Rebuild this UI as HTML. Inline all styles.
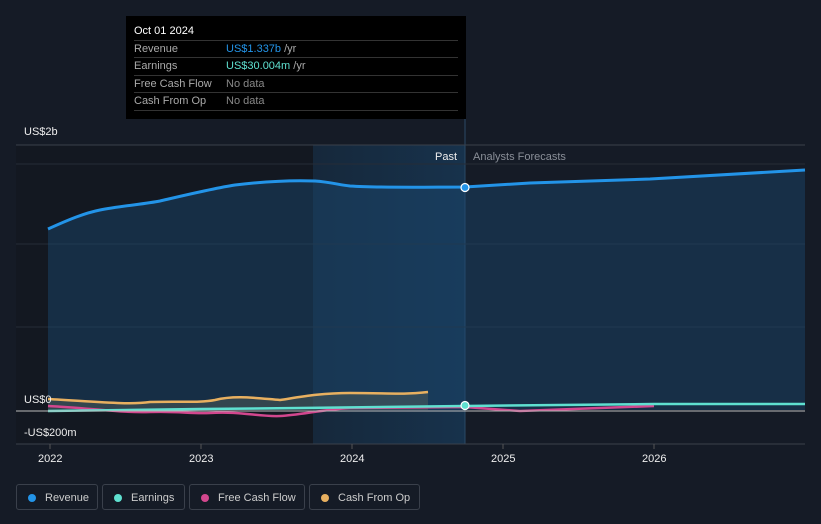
<!DOCTYPE html>
<html><head><meta charset="utf-8"><style>
body{margin:0;background:#151b26;width:821px;height:524px;overflow:hidden;font-family:"Liberation Sans",sans-serif;position:relative}
.tt{position:absolute;left:126px;top:16px;width:340px;height:103px;background:#000}
.tt .h{position:absolute;left:8px;top:9px;color:#fff;font-size:11px}
.row{position:absolute;left:8px;width:324px;border-top:1px solid #333;height:17px;font-size:11px;line-height:17px}
.row .k{position:absolute;left:0;color:#aaa}.row .v{position:absolute;left:92px;color:#888}
.leg{position:absolute;top:484px;height:26px;border:1px solid #3a404b;border-radius:3px;color:#ccc;font-size:11px;line-height:26px;box-sizing:border-box}
.leg i{position:absolute;left:11px;top:9px;width:8px;height:8px;border-radius:50%}
.leg span{position:absolute;left:28px}
</style></head><body>
<svg width="821" height="524" style="position:absolute;left:0;top:0">
<defs><linearGradient id="pg" x1="0" x2="1"><stop offset="0" stop-color="#16283b"/><stop offset="1" stop-color="#17324c"/></linearGradient></defs>
<rect x="16" y="145" width="297" height="299" fill="#131821"/>
<rect x="313" y="145" width="152" height="299" fill="url(#pg)"/>
<line x1="465" y1="16" x2="465" y2="444" stroke="#2a4a66" stroke-width="1"/>
<line x1="16" y1="145" x2="805" y2="145" stroke="#3a404b"/>
<line x1="16" y1="164" x2="805" y2="164" stroke="#262c37"/>
<line x1="16" y1="244" x2="805" y2="244" stroke="#262c37"/>
<line x1="16" y1="327" x2="805" y2="327" stroke="#262c37"/>
<path d="M48,229 C70,219 85,213 100,210 C120,206 145,204 160,201 C190,194 215,188 235,185 C260,182 290,180 315,181 C330,182 340,185 350,186 C380,188 430,187 465,187 L530,183 L650,179 L805,170 L805,410 L48,410Z" fill="#1b4a70" fill-opacity="0.45"/>
<path d="M48,229 C70,219 85,213 100,210 C120,206 145,204 160,201 C190,194 215,188 235,185 C260,182 290,180 315,181 C330,182 340,185 350,186 C380,188 430,187 465,187 L530,183 L650,179 L805,170" fill="none" stroke="#2394e8" stroke-width="3"/>
<path d="M48,399 C100,402 130,405 150,402 C180,401 200,403 215,400 C235,395 255,398 280,400 C300,397 320,393 350,393 C390,393 400,395 428,392 L428,410 L48,410Z" fill="#6b6f5e" fill-opacity="0.35"/>
<path d="M48,399 C100,402 130,405 150,402 C180,401 200,403 215,400 C235,395 255,398 280,400 C300,397 320,393 350,393 C390,393 400,395 428,392" fill="none" stroke="#e8b060" stroke-width="2.5"/>
<path d="M48,406 C90,408 120,413 150,412 C180,411 190,414 210,413 C240,411 260,417 280,416 C300,415 320,410 350,408 L465,407 L520,411 L654,406" fill="none" stroke="#d2478e" stroke-width="2.5"/>
<path d="M48,411 L200,409 L300,408 L465,406 L654,404 L805,404" fill="none" stroke="#5fe0d0" stroke-width="2.5"/>
<line x1="16" y1="411" x2="805" y2="411" stroke="#bbb" stroke-width="1"/>
<line x1="16" y1="444" x2="805" y2="444" stroke="#3a404b"/>
<g stroke="#555"><line x1="50" y1="444" x2="50" y2="449"/><line x1="201" y1="444" x2="201" y2="449"/><line x1="352" y1="444" x2="352" y2="449"/><line x1="503" y1="444" x2="503" y2="449"/><line x1="654" y1="444" x2="654" y2="449"/></g>
<circle cx="465" cy="187.5" r="4" fill="#2394e8" stroke="#fff" stroke-width="1.2"/>
<circle cx="465" cy="405.5" r="4" fill="#5fe0d0" stroke="#fff" stroke-width="1.2"/>
<g font-size="11" fill="#eee" font-family="Liberation Sans,sans-serif">
<text x="24" y="135">US$2b</text><text x="24" y="403">US$0</text><text x="24" y="436">-US$200m</text>
<text x="38" y="462">2022</text><text x="189" y="462">2023</text><text x="340" y="462">2024</text><text x="491" y="462">2025</text><text x="642" y="462">2026</text>
<text x="457" y="160" text-anchor="end">Past</text><text x="473" y="160" fill="#8a8f98">Analysts Forecasts</text>
</g>
</svg>
<div class="tt"><div class="h">Oct 01 2024</div>
<div class="row" style="top:24px"><span class="k">Revenue</span><span class="v" style="color:#2394e8">US$1.337b <span style="color:#aaa">/yr</span></span></div>
<div class="row" style="top:41px"><span class="k">Earnings</span><span class="v" style="color:#5fe0d0">US$30.004m <span style="color:#aaa">/yr</span></span></div>
<div class="row" style="top:59px"><span class="k">Free Cash Flow</span><span class="v">No data</span></div>
<div class="row" style="top:76px"><span class="k">Cash From Op</span><span class="v">No data</span></div>
<div class="row" style="top:94px;height:0"></div>
</div>
<div class="leg" style="left:16px;width:82px"><i style="background:#2394e8"></i><span>Revenue</span></div>
<div class="leg" style="left:102px;width:83px"><i style="background:#5fe0d0"></i><span>Earnings</span></div>
<div class="leg" style="left:189px;width:116px"><i style="background:#d2478e"></i><span>Free Cash Flow</span></div>
<div class="leg" style="left:309px;width:111px"><i style="background:#e8b060"></i><span>Cash From Op</span></div>
</body></html>
